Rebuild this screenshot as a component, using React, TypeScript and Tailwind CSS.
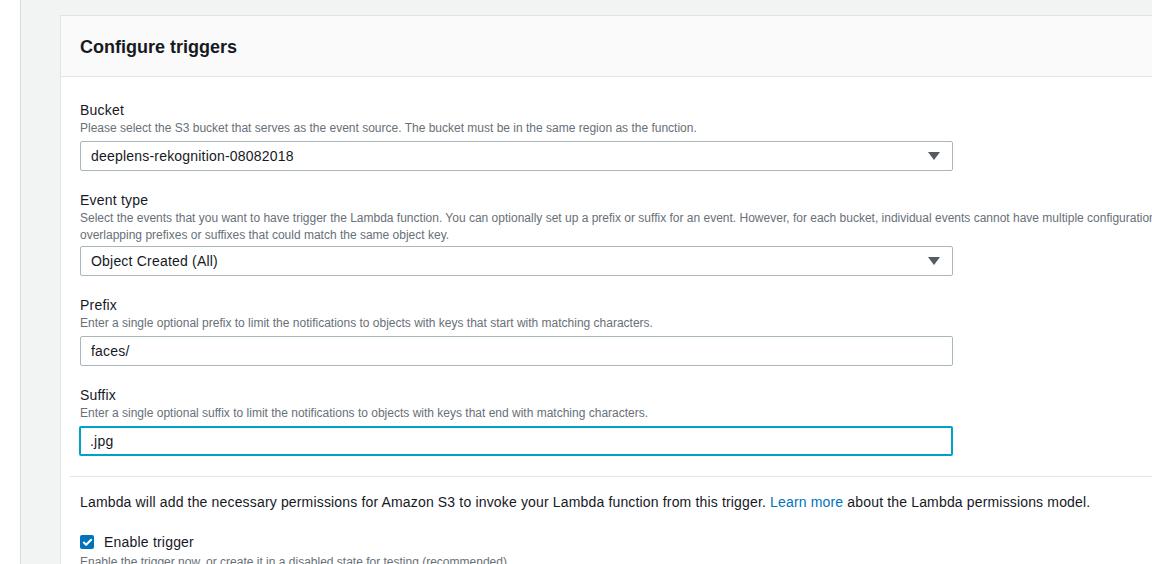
import { Check } from 'lucide-react';

const FONT = { fontFamily: '"Liberation Sans", Arial, sans-serif' };

function Caret() {
  return (
    <svg width="12" height="8" viewBox="0 0 12 8" className="shrink-0">
      <path d="M0 0h12L6 8z" fill="#545b64" />
    </svg>
  );
}

function Field({ label, help, gap, children }: { label: string; help: React.ReactNode; gap: string; children: React.ReactNode }) {
  return (
    <div className="flex flex-col">
      <span className="text-[14px] leading-[19px] tracking-[0.2px] text-[#16191f]">{label}</span>
      <span className="text-[12px] leading-[17px] text-[#687078]">{help}</span>
      <div className={gap}>{children}</div>
    </div>
  );
}

function Select({ value }: { value: string }) {
  return (
    <div className="w-[873px] h-[30px] border border-[#aab7b8] rounded-[2px] bg-white flex items-center justify-between pl-[10px] pr-[12px]">
      <span className="text-[14px] tracking-[0.2px] text-[#16191f]">{value}</span>
      <Caret />
    </div>
  );
}

function Input({ value, focused }: { value: string; focused?: boolean }) {
  return (
    <div
      className={
        focused
          ? 'w-[874px] h-[30px] border-2 border-[#00a1c9] rounded-[2px] bg-white flex items-center pl-[9px] -ml-[1px]'
          : 'w-[873px] h-[30px] border border-[#aab7b8] rounded-[2px] bg-white flex items-center pl-[10px]'
      }
    >
      <span className="text-[14px] tracking-[0.2px] text-[#16191f]">{value}</span>
    </div>
  );
}

export default function App() {
  return (
    <div className="flex h-screen overflow-hidden bg-white" style={FONT}>
      <div className="w-[21px] shrink-0 border-r border-[#d5dbdb] bg-white" />
      <div className="flex-1 bg-[#f2f3f3] pl-[39px] pt-[15px] min-w-0">
        <div className="bg-white border-l border-t border-[#e1e4e4] h-full">
          <div className="h-[61px] bg-[#fafafa] border-b border-[#e4e7e7] flex items-center px-[19px] pt-[2px]">
            <h2 className="text-[18px] font-bold text-[#16191f]">Configure triggers</h2>
          </div>
          <div className="pl-[9px] pt-[24px]">
            <div className="pl-[10px] flex flex-col gap-[20px] whitespace-nowrap">
              <Field gap="mt-[4px]" label="Bucket" help="Please select the S3 bucket that serves as the event source. The bucket must be in the same region as the function.">
                <Select value="deeplens-rekognition-08082018" />
              </Field>
              <Field
                gap="mt-[2px]"
                label="Event type"
                help={
                  <>
                    Select the events that you want to have trigger the Lambda function. You can optionally set up a prefix or suffix for an event. However, for each bucket, individual events cannot have multiple configurations with
                    <br />
                    overlapping prefixes or suffixes that could match the same object key.
                  </>
                }
              >
                <Select value="Object Created (All)" />
              </Field>
              <Field gap="mt-[4px]" label="Prefix" help="Enter a single optional prefix to limit the notifications to objects with keys that start with matching characters.">
                <Input value="faces/" />
              </Field>
              <Field gap="mt-[4px]" label="Suffix" help="Enter a single optional suffix to limit the notifications to objects with keys that end with matching characters.">
                <Input value=".jpg" focused />
              </Field>
            </div>
            <div className="mt-[20px] border-t border-[#e4e7e7]" />
            <div className="pl-[10px] pt-[15px] whitespace-nowrap">
              <p className="text-[14px] leading-[20px] tracking-[0.16px] text-[#16191f]">
                Lambda will add the necessary permissions for Amazon S3 to invoke your Lambda function from this trigger.{' '}
                <span className="text-[#0073bb]">Learn more</span> about the Lambda permissions model.
              </p>
              <div className="mt-[20px] flex items-center gap-[10px]">
                <span className="w-[14px] h-[14px] rounded-[2px] bg-[#0073bb] flex items-center justify-center">
                  <Check className="w-[11px] h-[11px] text-white" strokeWidth={4.5} />
                </span>
                <span className="text-[14px] leading-[20px] tracking-[0.2px] text-[#16191f]">Enable trigger</span>
              </div>
              <p className="mt-[2px] text-[12px] leading-[16px] text-[#687078]">
                Enable the trigger now, or create it in a disabled state for testing (recommended).
              </p>
            </div>
          </div>
        </div>
      </div>
    </div>
  );
}
